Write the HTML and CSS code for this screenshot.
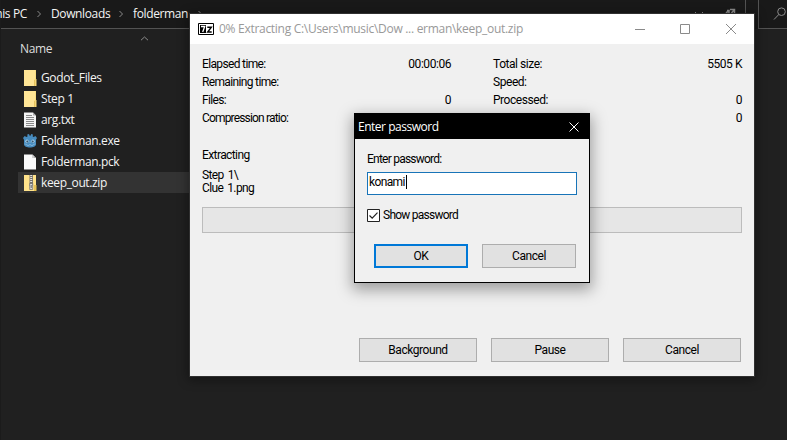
FILE: index.html
```html
<!DOCTYPE html>
<html lang="en">
<head>
<meta charset="utf-8">
<title>Extracting</title>
<link rel="stylesheet" href="styles.css">
</head>
<body>
<main class="desktop">
  <section class="explorer">
    <header class="toolbar">
      <nav class="address">
        <span class="crumb crumb-pc">This PC</span>
        <svg class="sep" viewBox="0 0 6 8"><path d="M1.500 1l3 3-3 3"/></svg>
        <span class="crumb crumb-dl">Downloads</span>
        <svg class="sep" viewBox="0 0 6 8"><path d="M1.500 1l3 3-3 3"/></svg>
        <span class="crumb crumb-fm">folderman</span>
        <svg class="sep" viewBox="0 0 6 8"><path d="M1.500 1l3 3-3 3"/></svg>
        <span class="tools">
          <svg width="10" height="6" viewBox="0 0 10 6"><path d="M1 1l4 4 4-4"/></svg>
          <svg width="11" height="12" viewBox="0 0 11 12"><path stroke-width="1.500" d="M5 1.500h4.500v4M9.500 1.500L6.500 5M2 2.500h2v3M8.500 5a4 4 0 1 1-5-2"/></svg>
        </span>
      </nav>
      <div class="search"><svg width="14" height="14" viewBox="0 0 14 14"><circle cx="8.500" cy="4.700" r="3.800"/><path d="M5.800 7.500L1 12.500"/></svg></div>
    </header>
    <div class="columns"><span>Name</span><svg class="sort" viewBox="0 0 9 5"><path d="M1 4.200l3.500-3.200 3.500 3.200"/></svg></div>
    <ul class="files">
      <li><svg class="icon" viewBox="0 0 14 16"><path fill="#f8dc80" d="M1 0h12v16H1z"/><path fill="#ffe596" d="M1 0h11v16H1z"/><path fill="#f8d775" d="M11 16V10l1-1h1.500v7z"/><path fill="#d9b553" d="M11 10h.6v6H11z"/></svg><span>Godot_Files</span></li>
      <li><svg class="icon" viewBox="0 0 14 16"><path fill="#f8dc80" d="M1 0h12v16H1z"/><path fill="#ffe596" d="M1 0h11v16H1z"/><path fill="#f8d775" d="M11 16V10l1-1h1.500v7z"/><path fill="#d9b553" d="M11 10h.6v6H11z"/></svg><span>Step 1</span></li>
      <li><svg class="icon" viewBox="0 0 14 16"><path fill="#f4f4f4" d="M1 .5h9l3 3v12H1z"/><path fill="#aaa" d="M10 .5v3h3z"/><path stroke="#888" d="M3 3.500h6M3 5.500h8M3 7.500h8M3 9.500h8M3 11.500h8M3 13.500h8"/></svg><span>arg.txt</span></li>
      <li><svg class="icon" viewBox="0 0 14 16"><path fill="#478cbf" d="M0 5l1.700-2 1.700 1 1.100-.6L4.300 1.500 6 1l.7 1.700h.8L8.200 1l1.700.5-.2 1.900 1 .6 1.700-1L14 5l-1 1.700v4.600c0 4.300-12 4.300-12 0V6.700z"/><circle cx="4" cy="8.300" r="1.700" fill="#a5cbe6"/><circle cx="10" cy="8.300" r="1.700" fill="#a5cbe6"/><circle cx="4.300" cy="8.400" r="1" fill="#34556e"/><circle cx="9.700" cy="8.400" r="1" fill="#34556e"/><path stroke="#8bb9da" stroke-width=".7" d="M7 8v2M1.500 11l2.500.4v1l2 .2v-1h2v1l2-.2v-1l2.500-.4" fill="none"/></svg><span>Folderman.exe</span></li>
      <li><svg class="icon" viewBox="0 0 14 16"><path fill="#fafafa" d="M1 .5h8.500L13 4v11.500H1z"/><path fill="#a8a8a8" d="M9.500.5L13 4H9.500z"/><path fill="#eee" d="M10 2l1.500 1.500H10z"/></svg><span>Folderman.pck</span></li>
      <li class="selected"><svg class="icon" viewBox="0 0 14 16"><path fill="#ffe28a" d="M1 0h12v16H1z"/><path fill="#e9c354" d="M11 10h2.500v6H11z"/><path fill="#77736a" d="M6.500 0h3.500v11H6.500z"/><path stroke="#e4e4e4" stroke-dasharray="1 1" stroke-width="2" d="M8.200 0v8"/><path fill="#ddd" stroke="#666" stroke-width=".7" d="M6.700 8.500h3v6h-3z"/><path stroke="#666" d="M8.200 10v3"/></svg><span>keep_out.zip</span></li>
    </ul>
  </section>

  <section class="window">
    <header class="titlebar">
      <svg class="app" viewBox="0 0 16 12"><path fill="#fff" stroke="#000" d="M.5.5h15v11H.5z"/><path fill="#000" d="M2 2h6v8H2z"/><path fill="none" stroke="#fff" stroke-width="1.300" d="M3 3.500h3.700L4.700 9"/><path fill="none" stroke="#000" stroke-width="1.400" d="M9.300 4.300h4L9.700 9h4"/></svg>
      <h1>0% Extracting C:\Users\music\Dow ... erman\keep_out.zip</h1>
      <svg class="controls" viewBox="0 0 102 12"><path d="M0 6.500h10M45.500 1.500h9v9h-9zM91 1l10 10M101 1L91 11"/></svg>
    </header>
    <div class="stats">
      <dl>
        <div><dt>Elapsed time:</dt><dd>00:00:06</dd></div>
        <div><dt>Remaining time:</dt><dd></dd></div>
        <div><dt>Files:</dt><dd>0</dd></div>
        <div><dt class="condensed">Compression ratio:</dt><dd></dd></div>
      </dl>
      <dl>
        <div><dt>Total size:</dt><dd>5505 K</dd></div>
        <div><dt>Speed:</dt><dd></dd></div>
        <div><dt>Processed:</dt><dd>0</dd></div>
        <div><dt></dt><dd>0</dd></div>
      </dl>
    </div>
    <p class="status">Extracting</p>
    <p class="path">Step 1\<br>Clue 1.png</p>
    <div class="progress"></div>
    <footer class="actions"><button>Background</button><button>Pause</button><button>Cancel</button></footer>
  </section>

  <section class="dialog">
    <header><h2>Enter password</h2><svg width="10" height="10" viewBox="0 0 10 10"><path d="M.5.5l9 9M9.500.5l-9 9"/></svg></header>
    <label class="prompt">Enter password:</label>
    <div class="field"><span>konami</span><i class="caret"></i></div>
    <div class="check"><svg viewBox="0 0 13 13"><path fill="#fff" stroke="#222" d="M.5.5h12v12H.5z"/><path fill="none" stroke="#222" stroke-width="1.200" d="M2.500 6.500l2.700 2.700 5.300-5.500"/></svg><span>Show password</span></div>
    <footer><button class="primary">OK</button><button>Cancel</button></footer>
  </section>
</main>
</body>
</html>
```
FILE: styles.css
```css
* { box-sizing: border-box; }
body { margin: 0; overflow: hidden; font: 12px/18px Roboto, "Liberation Sans", sans-serif; letter-spacing: -0.45px; color: #000; }
h1, h2, p, dl, dd, ul { margin: 0; padding: 0; font-weight: 400; }
svg { flex: none; }
.desktop { position: relative; width: 787px; height: 440px; background: #202020; overflow: hidden; }

.explorer { height: 440px; color: #f4f4f4; font-family: "Open Sans", "Noto Sans", sans-serif; letter-spacing: -0.37px; border-left: 1px solid #1b1b1b; }
.toolbar { display: flex; gap: 12px; height: 29px; background: #191919; }
.address { display: flex; align-items: center; width: 745px; padding-bottom: 1px; border: solid #535353; border-width: 0 1px 1px 0; }
.crumb { white-space: nowrap; }
.crumb-pc { width: 26px; display: flex; justify-content: flex-end; }
.crumb-dl { width: 58px; }
.crumb-fm { width: 55px; }
.sep { width: 6px; height: 8px; margin: 0 9px; fill: none; stroke: #8a8a8a; }
.tools { display: flex; gap: 21px; margin-left: auto; margin-right: 9px; align-items: center; }
.tools svg, .search svg, .sort { fill: none; stroke: #8c8c8c; }
.search { flex: 1; padding: 7px 0 0 14px; border: solid #535353; border-width: 0 0 1px 1px; }
.columns { display: flex; height: 38px; padding: 11px 0 0 19px; color: #dedede; }
.columns span { width: 120px; }
.sort { width: 9px; height: 5px; margin-top: -4px; }
.files { width: 190px; list-style: none; padding-left: 17px; }
.files li { display: flex; align-items: center; gap: 4px; height: 21px; padding-left: 5px; white-space: nowrap; }
.files .selected { background: #333; }
.icon { width: 14px; height: 16px; }

.window { position: absolute; left: 190px; top: 14px; width: 564px; height: 362px; background: #f0f0f0; box-shadow: 0 0 0 1px #303030, 0 2px 10px 2px rgba(0,0,0,.4); }
.titlebar { display: flex; align-items: center; height: 30px; padding: 0 17px 0 8px; background: #fff; }
.app { width: 16px; height: 12px; margin-right: 5px; }
.titlebar h1 { flex: 1; font: 12px/18px "Open Sans", sans-serif; letter-spacing: -0.29px; color: #999; white-space: nowrap; }
.controls { width: 102px; height: 12px; fill: none; stroke: #8a8a8a; }
.stats { display: flex; gap: 42px; padding: 11px 12px 0; }
.stats dl { flex: 1; }
.stats dl div { display: flex; justify-content: space-between; height: 18px; }
.stats dl:first-child dt { letter-spacing: -0.65px; }
.stats dl:first-child .condensed { letter-spacing: -0.83px; }
.status { padding: 19px 12px 0; letter-spacing: -0.6px; }
.path { padding: 5px 12px 0; line-height: 13px; letter-spacing: -0.6px; word-spacing: 1.500px; }
.progress { height: 26px; margin: 12px 12px 0; border: 1px solid #bcbcbc; background: #e6e6e6; }
.actions { display: flex; gap: 14px; margin: 105px 13px 0; justify-content: flex-end; }
button { width: 118px; height: 24px; padding: 0; border: 1px solid #adadad; background: #e1e1e1; color: #000; font: inherit; letter-spacing: inherit; }

.dialog { position: absolute; left: 354px; top: 113px; width: 236px; height: 170px; border: 1px solid #000; background: #f0f0f0; box-shadow: 0 5px 14px 2px rgba(0,0,0,.34); }
.dialog header { display: flex; align-items: center; justify-content: space-between; height: 25px; padding: 0 10px 0 3px; background: #000; }
.dialog header svg { fill: none; stroke: #fff; }
.dialog h2 { font: 12px/18px "Open Sans", sans-serif; letter-spacing: -0.48px; color: #fff; }
.prompt { display: block; padding: 11px 12px 0; letter-spacing: -0.77px; }
.field { display: flex; align-items: flex-start; height: 23px; margin: 4px 12px 0; padding: 0 1px; border: 1px solid #1874b8; background: #fff; letter-spacing: -0.63px; }
.caret { width: 1px; height: 14px; margin: 2px 0 0 1px; background: #000; }
.check { display: flex; align-items: center; gap: 3px; height: 18px; margin: 11px 12px 0; letter-spacing: -0.75px; }
.check svg { width: 13px; height: 13px; }
.dialog footer { display: flex; gap: 14px; margin: 20px 13px 0; justify-content: flex-end; }
.dialog button { width: 94px; }
.dialog .primary { border: 2px solid #0078d7; }
```
